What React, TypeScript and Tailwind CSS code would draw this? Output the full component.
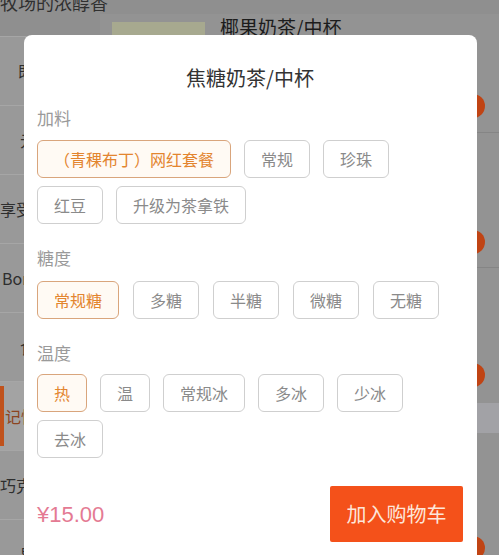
import React from "react";

const extras = ["（青稞布丁）网红套餐", "常规", "珍珠", "红豆", "升级为茶拿铁"];
const sugars = ["常规糖", "多糖", "半糖", "微糖", "无糖"];
const temps = ["热", "温", "常规冰", "多冰", "少冰", "去冰"];

const sideItems = [
  { label: "既有颜值", pl: "pl-[18px]" },
  { label: "元气早餐", pl: "pl-[20px]" },
  { label: "享受时光", pl: "pl-0" },
  { label: "Bonjour", pl: "pl-[2px]" },
  { label: "食物", pl: "pl-[20px]" },
  { label: "记忆中的", pl: "pl-[1px]", active: true },
  { label: "巧克力", pl: "pl-0" },
  { label: "导购", pl: "pl-[20px]" },
];

function Chip({ label, active }: { label: string; active?: boolean }) {
  return (
    <div
      className={
        active
          ? "inline-flex h-[38px] items-center rounded-[6px] border border-[#d9a57c] bg-[#fffaf4] px-4 text-[16px] leading-none whitespace-nowrap text-[#e3852f]"
          : "inline-flex h-[38px] items-center rounded-[6px] border border-[#cfcfcf] bg-white px-4 text-[16px] leading-none whitespace-nowrap text-[#8a8a8a]"
      }
    >
      {label}
    </div>
  );
}

function Circle() {
  return <div className="h-[24px] w-[24px] rounded-full bg-[#c04414]" />;
}

export default function App() {
  return (
    <div className="relative h-[555px] w-[499px] overflow-hidden bg-[#8f8f8f] font-['Noto_Sans_CJK_SC',sans-serif]">
      {/* dimmed page behind the sheet */}
      <div className="h-[14px] overflow-hidden">
        <div className="-mt-[7px] text-[18px] leading-[18px] whitespace-nowrap text-[#303030]">
          牧场的浓醇香
        </div>
      </div>
      <div className="flex">
        <div className="w-[100px] shrink-0 bg-[#999999]">
          <div className="h-[23px] border-b border-[#a6a6a6] bg-[#8f8f8f]" />
          {sideItems.map((it) => (
            <div
              key={it.label}
              className={
                it.active
                  ? "flex h-[69px] items-center border-b border-[#a6a6a6] bg-[#a3a3a3]"
                  : "flex h-[69px] items-center border-b border-[#a6a6a6]"
              }
            >
              {it.active && <div className="h-[60px] w-[4px] shrink-0 bg-[#c0521c]" />}
              <div className={it.active ? "w-[20px] overflow-hidden" : "w-[24px] overflow-hidden"}>
                <div
                  className={
                    it.active
                      ? `${it.pl} text-[16px] whitespace-nowrap text-[#8c4420]`
                      : `${it.pl} text-[16px] whitespace-nowrap text-[#2e2e2e]`
                  }
                >
                  {it.label}
                </div>
              </div>
            </div>
          ))}
        </div>
        <div className="flex-1 bg-[#939393]">
          <div className="flex h-[119px] border-b border-[#858585]">
            <div className="mt-[8px] ml-[12px] h-[80px] w-[93px] bg-[#a7a98f]" />
            <div className="mt-[1px] ml-[15px] text-[19px] leading-[24px] whitespace-nowrap text-[#1c1c1c]">
              椰果奶茶/中杯
            </div>
            <div className="ml-auto flex items-end pr-[14px] pb-[14px]">
              <Circle />
            </div>
          </div>
          <div className="flex h-[135px] items-end justify-end border-b border-[#858585] pr-[14px] pb-[13px]">
            <Circle />
          </div>
          <div className="flex h-[135px] items-end justify-end pr-[14px] pb-[16px]">
            <Circle />
          </div>
          <div className="h-[30px] bg-[#a2a2a6]" />
          <div className="flex h-[135px] items-end justify-end pr-[14px] pb-[8px]">
            <Circle />
          </div>
        </div>
      </div>

      {/* option sheet */}
      <div className="absolute top-[35px] left-[24px] flex h-[540px] w-[453px] flex-col rounded-t-[8px] bg-white pt-[29px] pr-[14px] pl-[13px]">
        <div className="text-center text-[20px] leading-[28px] text-[#333333]">焦糖奶茶/中杯</div>

        <div className="mt-[15px] text-[17px] leading-[22px] text-[#9a9a9a]">加料</div>
        <div className="mt-[11px] flex flex-wrap gap-x-[13px] gap-y-[8px]">
          {extras.map((e, i) => (
            <Chip key={e} label={e} active={i === 0} />
          ))}
        </div>

        <div className="mt-[23px] text-[17px] leading-[22px] text-[#9a9a9a]">糖度</div>
        <div className="mt-[12px] flex flex-wrap gap-x-[14px] gap-y-[8px]">
          {sugars.map((s, i) => (
            <Chip key={s} label={s} active={i === 0} />
          ))}
        </div>

        <div className="mt-[23px] text-[17px] leading-[22px] text-[#9a9a9a]">温度</div>
        <div className="mt-[10px] flex flex-wrap gap-x-[13px] gap-y-[8px]">
          {temps.map((t, i) => (
            <Chip key={t} label={t} active={i === 0} />
          ))}
        </div>

        <div className="mt-[28px] flex items-center justify-between">
          <div className="font-['Liberation_Sans',sans-serif] text-[22px] text-[#e47a93]">¥15.00</div>
          <button className="h-[56px] w-[133px] rounded-[2px] bg-[#f4511a] text-[20px] text-[#fde6da]">
            加入购物车
          </button>
        </div>
      </div>
    </div>
  );
}
